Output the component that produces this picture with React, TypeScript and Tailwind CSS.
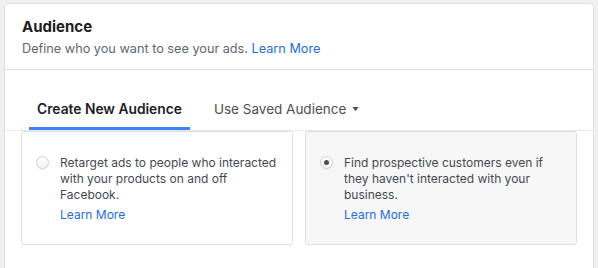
import { useState } from "react"

type Option = {
  id: string
  text: string
}

const options: Option[] = [
  { id: "retarget", text: "Retarget ads to people who interacted with your products on and off Facebook." },
  { id: "prospect", text: "Find prospective customers even if they haven't interacted with your business." },
]

function Radio({ checked }: { checked: boolean }) {
  return (
    <span className="mt-[1px] flex h-[13px] w-[13px] shrink-0 items-center justify-center rounded-full border border-[#ccd0d5] bg-gradient-to-b from-white to-[#f2f3f5] shadow-[0_1px_1px_rgba(0,0,0,0.05)]">
      {checked && <span className="h-[5px] w-[5px] rounded-full bg-[#4b4f56]" />}
    </span>
  )
}

export default function App() {
  const [selected, setSelected] = useState("prospect")

  return (
    <div className="h-[268px] w-[598px] overflow-hidden bg-[#f0f0f0] pl-[4px] pr-[4px] pt-[3px] font-['Inter',sans-serif]">
      <div className="h-[300px] rounded-t-[4px] border border-[#dddfe2] bg-white">
        {/* header */}
        <div className="border-b border-[#dddfe2] px-[17px] pb-[11px] pt-[13px]">
          <h2 className="text-[15px] font-bold leading-[20px] text-[#1c1e21]">Audience</h2>
          <p className="mt-[3px] text-[12.7px] leading-[18px] text-[#606770]">
            Define who you want to see your ads. <span className="text-[#216fdb]">Learn More</span>
          </p>
        </div>

        {/* tabs */}
        <div className="mt-[30px] flex border-b border-[#e9eaed] pl-[24px]">
          <button className="border-b-[3px] border-[#4080ff] px-[8px] pb-[9px] text-[13.8px] font-semibold leading-[18px] text-[#1c1e21]">
            Create New Audience
          </button>
          <button className="ml-[16px] flex items-center gap-[6px] px-[8px] pb-[12px] text-[13.5px] leading-[18px] text-[#4b4f56]">
            Use Saved Audience
            <svg width="7" height="4" viewBox="0 0 8 5">
              <path d="M0 0h8L4 5z" fill="#4b4f56" />
            </svg>
          </button>
        </div>

        {/* options */}
        <div className="grid grid-cols-2 gap-[12px] px-[16px]">
          {options.map((o) => {
            const active = selected === o.id
            return (
              <div
                key={o.id}
                onClick={() => setSelected(o.id)}
                className={`flex h-[114px] gap-[11px] rounded-[3px] border border-[#dddfe2] px-[14px] pt-[23px] ${
                  active ? "bg-[#f7f7f7]" : "bg-white"
                }`}
              >
                <Radio checked={active} />
                <div className="text-[12px] leading-[16px] text-[#444950]">
                  <p>{o.text}</p>
                  <p className="mt-[4px] text-[#216fdb]">Learn More</p>
                </div>
              </div>
            )
          })}
        </div>
      </div>
    </div>
  )
}
